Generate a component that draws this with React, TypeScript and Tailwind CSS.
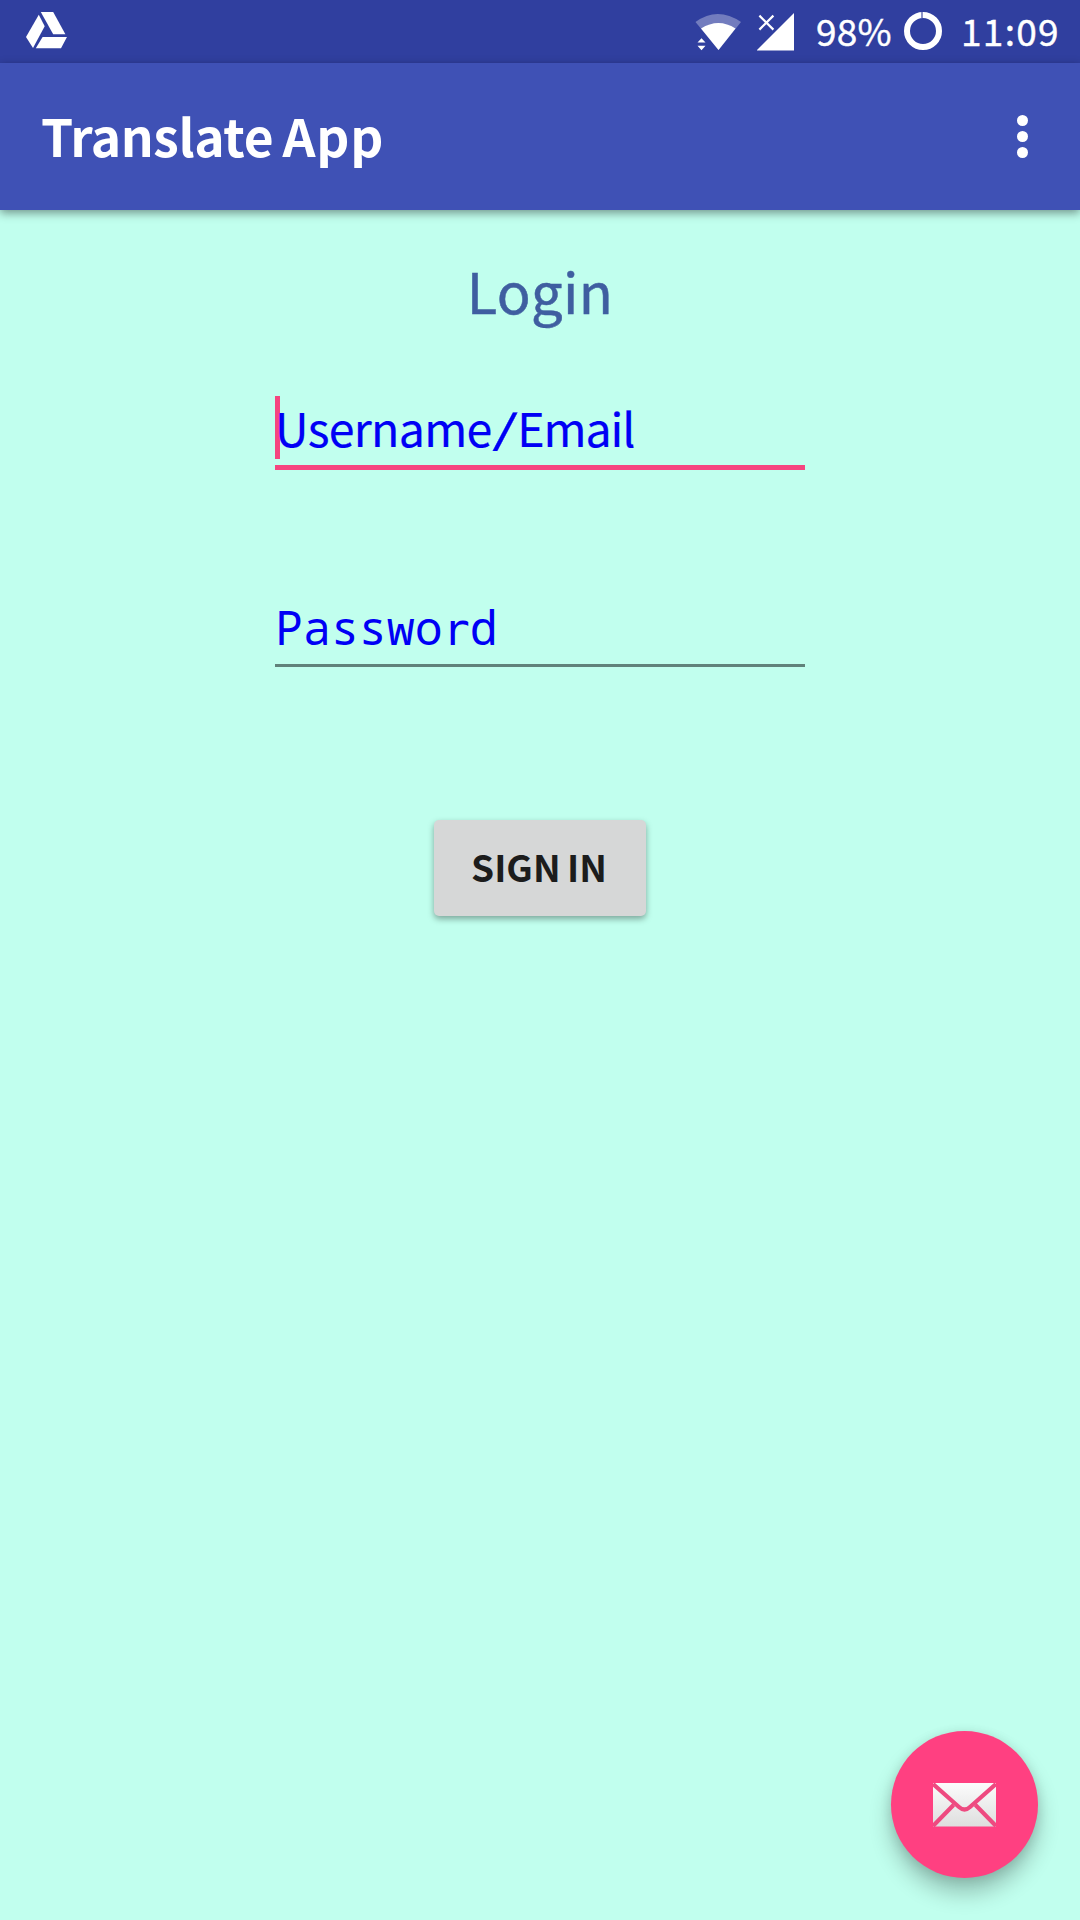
import React from "react";

function StatusBar() {
  return (
    <div className="flex h-[63px] w-full bg-[#303f9f] text-[37px] leading-[61px] text-white">
      <svg className="ml-[26px] mt-3 h-[37px] w-[41px]" viewBox="0 0 41 37" fill="white">
        <path d="M14.8 0H27.2L39.4 22.2H27.2Z" />
        <path d="M12.8 2.7L18.7 14.2L7 36L0 25Z" />
        <path d="M16.6 25H41L35 36.2H9.8Z" />
      </svg>
      <svg className="ml-auto mt-3 h-10 w-[48px] shrink-0" viewBox="0 0 48 40" fill="white">
        <path d="M0.500 10Q22.500-6 46 10L23.500 38Z" opacity=".32" />
        <path d="M6 16.500Q23.500 5.500 40.500 16.500L23.500 38Z" />
        <path d="M2.500 30.500L6.500 26.300L10.500 30.500ZM2.500 33.800H10.500L6.500 38.300Z" />
      </svg>
      <svg className="ml-[14px] mt-3 h-10 w-[39px] shrink-0" viewBox="0 0 39 40" fill="white">
        <path d="M37 1V38.500H-0.500Z" />
        <path d="M2.400 3.600L16.400 17.600M16.400 3.600L2.400 17.600" stroke="white" strokeWidth="2.200" />
      </svg>
      <span className="ml-[20px] w-[88px] whitespace-nowrap tracking-[0.2px] [-webkit-text-stroke:0.4px_white]">98%</span>
      <svg className="mt-3 h-[38px] w-[38px] shrink-0" viewBox="0 0 38 38" fill="none" stroke="white">
        <circle cx="19" cy="19" r="16" strokeWidth="6" />
        <path d="M18 0V6" stroke="#8088c0" strokeWidth="1.800" />
      </svg>
      <span className="ml-[19px] w-[119px] whitespace-nowrap tracking-[1.3px] [-webkit-text-stroke:0.4px_white]">11:09</span>
    </div>
  );
}

function AppBar() {
  return (
    <header className="relative flex h-[147px] items-center justify-between bg-[#3f51b5] pl-[41px] pr-[52px] text-white shadow-[0_3px_9px_rgba(0,0,0,0.42)]">
      <h1 className="whitespace-nowrap pb-[3px] text-[51.5px] font-bold leading-[120px] tracking-[0.7px] [word-spacing:-3px]">
        <span className="tracking-[-0.4px]">Translate</span> App
      </h1>
      <button aria-label="More options" className="flex flex-col gap-[5px]">
        <span className="size-[11px] rounded-full bg-white" />
        <span className="size-[11px] rounded-full bg-white" />
        <span className="size-[11px] rounded-full bg-white" />
      </button>
    </header>
  );
}

export default function App() {
  return (
    <div className="relative flex h-[1920px] w-[1080px] flex-col overflow-hidden bg-[#c1ffee] font-['Noto_Sans_CJK_SC',sans-serif]">
      <StatusBar />
      <AppBar />
      <main className="flex flex-1 flex-col items-center">
        <h2 className="mt-[44px] text-[56px] leading-[72px] tracking-[0.3px] text-[#3f5ea0] [-webkit-text-stroke:0.5px_#3f5ea0]">Login</h2>
        <div className="mt-[70px] flex h-[74px] w-[530px] flex-col justify-between">
          <div className="relative h-[63px] whitespace-nowrap text-[46.5px] leading-[61px] text-[#0000f5] [-webkit-text-stroke:0.2px_#0000f5]">
            <span className="absolute left-0 top-0 h-[63px] w-[5px] bg-[#f5457f]" />
            <span className="relative tracking-[-0.7px]">
              Username<span className="mx-[4px] inline-block scale-x-145 scale-y-85">/</span>
              <span className="tracking-[-1.1px]">Email</span>
            </span>
          </div>
          <div className="h-[5px] bg-[#f5457f]" />
        </div>
        <div className="mt-[126px] flex h-[71px] w-[530px] flex-col justify-between">
          <div className="h-[60px] whitespace-nowrap font-['Noto_Sans_Mono','DejaVu_Sans_Mono',monospace] text-[46.6px] leading-[63px] text-[#0000f5]">
            Passwo<span className="font-['DejaVu_Sans_Mono',monospace] text-[45px] leading-none">r</span>d
          </div>
          <div className="h-[3px] bg-[#60827a]" />
        </div>
        <button className="mt-[153px] h-[96px] w-[212px] whitespace-nowrap rounded-[5px] bg-[#d6d7d7] pb-[4px] pr-[2px] text-[37px] font-bold leading-[80px] text-[#1c1c1c] shadow-[0_3px_6px_rgba(0,0,0,0.35)] [word-spacing:-2px]">
          SIGN IN
        </button>
      </main>
      <button
        aria-label="Messages"
        className="absolute bottom-[42px] right-[42px] flex size-[147px] items-center justify-center rounded-full bg-[#ff4081] shadow-[0_15px_22px_rgba(0,0,0,0.24),0_2px_12px_rgba(0,0,0,0.12)]"
      >
        <svg className="h-[44px] w-[63px]" viewBox="0 0 63 44">
          <defs>
            <linearGradient id="paper" x1="0" y1="0" x2="0" y2="1">
              <stop offset="0" stopColor="#fcfcfc" />
              <stop offset="1" stopColor="#dedede" />
            </linearGradient>
          </defs>
          <rect width="63" height="43.500" fill="url(#paper)" />
          <path d="M0 1L26 24Q31.500 29 37 24L63 1M0 43L20.500 22M63 43L42.500 22" fill="none" stroke="#ee4a80" strokeWidth="4.200" />
        </svg>
      </button>
    </div>
  );
}
